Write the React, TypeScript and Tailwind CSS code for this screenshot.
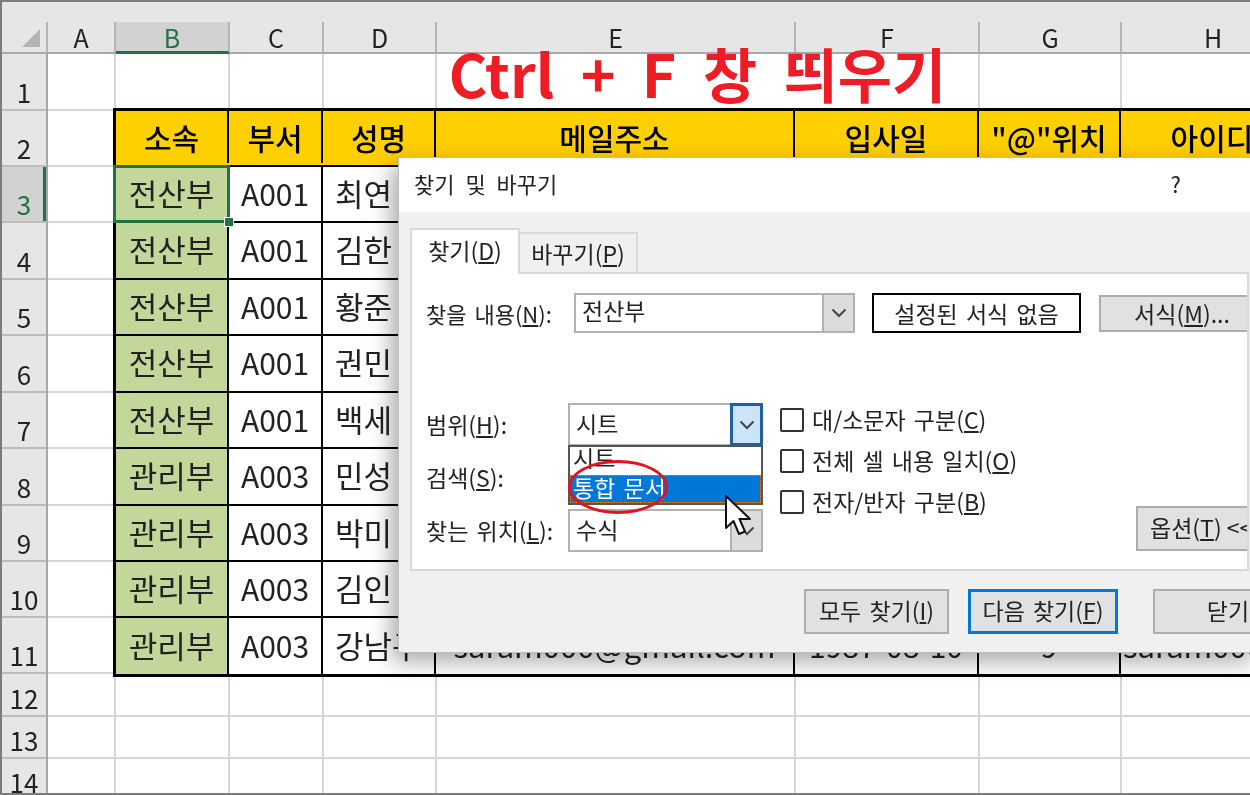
import { ReactNode } from "react";

const sheetFont = "font-['Noto_Sans_CJK_KR','Noto_Sans',sans-serif]";

const colHeaders = [
  { name: "A", width: "w-[68px]" },
  { name: "B", width: "w-[114px]" },
  { name: "C", width: "w-[94px]" },
  { name: "D", width: "w-[113px]" },
  { name: "E", width: "w-[359px]" },
  { name: "F", width: "w-[184px]" },
  { name: "G", width: "w-[142px]" },
  { name: "H", width: "w-[184px]" },
];

const rowHeights = [
  "h-[57px]", "h-[56px]", "h-[56px]", "h-[57px]", "h-[56px]", "h-[57px]", "h-[56px]",
  "h-[57px]", "h-[56px]", "h-[56px]", "h-[56px]", "h-[43px]", "h-[42px]", "h-[42px]",
];

const people = [
  { dept: "전산부", code: "A001", name: "최연", height: "h-[56px]" },
  { dept: "전산부", code: "A001", name: "김한", height: "h-[57px]" },
  { dept: "전산부", code: "A001", name: "황준", height: "h-[56px]" },
  { dept: "전산부", code: "A001", name: "권민", height: "h-[57px]" },
  { dept: "전산부", code: "A001", name: "백세", height: "h-[56px]" },
  { dept: "관리부", code: "A003", name: "민성", height: "h-[57px]" },
  { dept: "관리부", code: "A003", name: "박미", height: "h-[56px]" },
  { dept: "관리부", code: "A003", name: "김인", height: "h-[56px]" },
  { dept: "관리부", code: "A003", name: "강남구", height: "h-[56px]" },
];

const tableHeaders = [
  { text: "소속", width: "w-[113px]" },
  { text: "부서", width: "w-[94px]" },
  { text: "성명", width: "w-[113px]" },
  { text: "메일주소", width: "w-[359px]" },
  { text: "입사일", width: "w-[184px]" },
  { text: "\"@\"위치", width: "w-[142px]" },
  { text: "아이디", width: "w-[184px]" },
];

function Label({ before, mnemonic, after = "" }: { before: string; mnemonic: string; after?: string }) {
  return (
    <span className="whitespace-nowrap [word-spacing:3px]">
      {before}(<u>{mnemonic}</u>){after}
    </span>
  );
}

function Chevron() {
  return (
    <svg width="16" height="10" viewBox="0 0 16 10" fill="none" stroke="#444" strokeWidth="2">
      <path d="M1.5 1.5 L8 8 L14.5 1.5" />
    </svg>
  );
}

function Combo({ text, active }: { text: string; active?: boolean }) {
  return (
    <div className="flex h-[43px] w-[195px] border-2 border-[#b0b0b0] bg-white">
      <div className="flex-1 pl-[6px] leading-[36px]">{text}</div>
      <div
        className={
          active
            ? "flex w-[33px] -my-[2px] -mr-[2px] items-center justify-center border-[3px] border-[#1f5fa8] bg-[#cce4f7]"
            : "flex w-[33px] -my-[2px] -mr-[2px] items-center justify-center border-2 border-[#b0b0b0] bg-[#dcdcdc]"
        }
      >
        <Chevron />
      </div>
    </div>
  );
}

function Check({ children }: { children: ReactNode }) {
  return (
    <div className="flex h-[41px] items-center gap-[8px]">
      <div className="h-[24px] w-[24px] rounded-[2px] border-2 border-[#333] bg-white" />
      {children}
    </div>
  );
}

function DialogButton({ children, width, primary }: { children: ReactNode; width: string; primary?: boolean }) {
  return (
    <div
      className={`flex h-[45px] ${width} shrink-0 items-center justify-center bg-[#e1e1e1] pb-[2px] text-[23px] ${
        primary ? "border-[3px] border-[#0078d7]" : "border-2 border-[#adadad]"
      }`}
    >
      {children}
    </div>
  );
}

function FindDialog() {
  return (
    <div className="absolute left-[396px] top-[155px] h-[496px] w-[860px] border border-[#bdbdbd] bg-[#f0f0f0] text-[#222] shadow-[-6px_8px_22px_rgba(0,0,0,0.35)]">
      <div className="flex h-[54px] items-center justify-between bg-white pb-[3px] pl-[15px] pr-[76px] text-[22px]">
        <span className="[word-spacing:6px]">찾기 및 바꾸기</span>
        <span>?</span>
      </div>

      <div className="flex h-[60px] items-end pl-[11px] text-[23px]">
        <div className="relative z-10 -mb-[2px] flex h-[46px] w-[110px] items-center justify-center border-2 border-b-0 border-[#d9d9d9] bg-white pb-[3px]">
          <Label before="찾기" mnemonic="D" />
        </div>
        <div className="flex h-[40px] w-[118px] items-center justify-center border-2 border-b-0 border-l-0 border-[#d9d9d9] bg-[#f0f0f0]">
          <Label before="바꾸기" mnemonic="P" />
        </div>
      </div>

      <div className="relative ml-[11px] h-[299px] w-[839px] overflow-hidden border-2 border-[#d9d9d9] bg-white pl-[14px] pt-[19px] text-[23px]">
        <div className="flex items-center">
          <div className="w-[148px] shrink-0 text-[22px]">
            <Label before="찾을 내용" mnemonic="N" after=":" />
          </div>
          <div className="flex h-[40px] w-[281px] shrink-0 border-2 border-[#b0b0b0]">
            <div className="flex-1 pl-[6px] leading-[30px]">전산부</div>
            <div className="flex w-[33px] -my-[2px] -mr-[2px] items-center justify-center border-2 border-[#b0b0b0] bg-[#dcdcdc]">
              <Chevron />
            </div>
          </div>
          <div className="ml-[17px] flex h-[40px] w-[209px] shrink-0 items-center justify-center border-2 border-black [word-spacing:3px]">
            설정된 서식 없음
          </div>
          <div className="ml-[18px] flex h-[37px] w-[170px] shrink-0 items-center justify-center border-2 border-[#adadad] bg-[#e1e1e1] pr-[4px]">
            서식(<u>M</u>)...
          </div>
        </div>

        <div className="mt-[70px] flex">
          <div className="flex w-[142px] shrink-0 flex-col">
            <div className="flex h-[53px] items-center pb-[10px]"><Label before="범위" mnemonic="H" after=":" /></div>
            <div className="flex h-[53px] items-center pb-[10px]"><Label before="검색" mnemonic="S" after=":" /></div>
            <div className="flex h-[53px] items-center pb-[10px]"><Label before="찾는 위치" mnemonic="L" after=":" /></div>
          </div>

          <div className="relative flex w-[195px] shrink-0 flex-col gap-[10px]">
            <Combo text="시트" active />
            <Combo text="" />
            <Combo text="수식" />
            <div className="absolute left-0 top-[42px] w-[195px] border-2 border-[#555] bg-white">
              <div className="h-[28px] pl-[3px] leading-[20px]">시트</div>
              <div className="h-[28px] border border-dotted border-[#e08a2a] bg-[#0078d7] pl-[2px] leading-[22px] text-white [word-spacing:3px]">
                통합 문서
              </div>
            </div>
          </div>

          <div className="ml-[17px] -mt-[4px] flex w-[300px] shrink-0 flex-col">
            <Check><Label before="대/소문자 구분" mnemonic="C" /></Check>
            <Check><Label before="전체 셀 내용 일치" mnemonic="O" /></Check>
            <Check><Label before="전자/반자 구분" mnemonic="B" /></Check>
          </div>

          <div className="ml-[56px] shrink-0 pt-[103px]">
            <DialogButton width="w-[140px]">
              <span className="w-full whitespace-nowrap pl-[12px]">옵션(<u>T</u>) &lt;&lt;</span>
            </DialogButton>
          </div>
        </div>
      </div>

      <div className="flex pl-[405px] pt-[18px]">
        <DialogButton width="w-[145px]"><Label before="모두 찾기" mnemonic="I" /></DialogButton>
        <DialogButton width="w-[150px] ml-[19px]" primary><Label before="다음 찾기" mnemonic="F" /></DialogButton>
        <DialogButton width="w-[150px] ml-[35px]">닫기</DialogButton>
      </div>
    </div>
  );
}

export default function App() {
  return (
    <div className={`relative h-[795px] w-[1250px] overflow-hidden border-2 border-r-0 border-[#7c7c7c] bg-white text-[#222] blur-[0.5px] ${sheetFont}`}>
      <div className="h-[20px] bg-[#e6e6e6]" />

      {/* column headers */}
      <div className="flex h-[32px] w-[1400px] border-b-2 border-[#a8a8a8] bg-[#e6e6e6] text-[25px] leading-[30px] text-[#222]">
        <div className="flex w-[46px] shrink-0 items-end justify-end border-r-2 border-[#b4b4b4] pb-[5px] pr-[6px]">
          <svg width="18" height="18" viewBox="0 0 18 18"><path d="M18 0 V18 H0 Z" fill="#b4b4b4" /></svg>
        </div>
        {colHeaders.map((c) => (
          <div
            key={c.name}
            className={
              c.name === "B"
                ? `${c.width} -mb-[2px] border-b-[3px] border-r-2 border-b-[#217346] border-r-[#b4b4b4] bg-[#d2d2d2] text-center text-[#217346]`
                : `${c.width} border-r-2 border-[#b4b4b4] text-center`
            }
          >
            {c.name}
          </div>
        ))}
      </div>

      {/* grid */}
      <div className="relative flex w-[1400px]">
        <div className="flex w-[46px] shrink-0 flex-col border-r-2 border-[#a8a8a8] bg-[#e6e6e6] text-[26px]">
          {rowHeights.map((h, i) => (
            <div
              key={i}
              className={
                i === 2
                  ? `${h} flex items-end justify-center border-b-2 border-[#bdbdbd] bg-[#d2d2d2] leading-[35px] text-[#217346] shadow-[inset_-3px_0_0_#217346]`
                  : `${h} flex items-end justify-center border-b-2 border-[#bdbdbd] leading-[35px]`
              }
            >
              {i + 1}
            </div>
          ))}
        </div>
        <div className="flex flex-1 flex-col">
          {rowHeights.map((h, i) => (
            <div key={i} className={`${h} flex border-b-2 border-[#d6d6d6]`}>
              {colHeaders.map((c) =>
                i === 0 && c.name === "E" ? (
                  <div key={c.name} className="w-[543px] border-r-2 border-[#d6d6d6]" />
                ) : i === 0 && c.name === "F" ? null : (
                  <div key={c.name} className={`${c.width} border-r-2 border-[#d6d6d6]`} />
                )
              )}
            </div>
          ))}
        </div>

        {/* 제목 */}
        <div className="absolute left-[434px] top-[-17px] w-[543px] whitespace-nowrap pr-[20px] text-center text-[59px] font-bold leading-[72px] text-[#ee1c25] [word-spacing:13px]">
          Ctrl + F 창 띄우기
        </div>

        {/* 표 */}
        <div className="absolute left-[111px] top-[54px] border-[3px] border-r-0 border-black text-[31px]">
          <div className="flex h-[56px] border-b-2 border-black bg-[#ffd000] pb-[2px] text-[30px] font-medium text-black">
            {tableHeaders.map((t) => (
              <div key={t.text} className={`${t.width} flex items-center justify-center whitespace-nowrap border-r-2 border-black`}>
                {t.text}
              </div>
            ))}
          </div>
          {people.map((p, i) => (
            <div key={i} className={`flex ${p.height} ${i === 8 ? "" : "border-b-2 border-black"}`}>
              <div className="flex w-[113px] items-center justify-center border-r-2 border-black bg-[#c4d79b] pb-[2px]">{p.dept}</div>
              <div className="flex w-[94px] items-center justify-center border-r-2 border-black bg-white pb-[2px] text-[30px]">{p.code}</div>
              <div className="flex w-[113px] items-center whitespace-nowrap border-r-2 border-black bg-white pb-[2px] pl-[12px]">{p.name}</div>
              {i === 8 ? (
                <>
                  <div className="flex w-[359px] items-center justify-center border-r-2 border-black bg-white pb-[2px] text-[31px]">saram000@gmail.com</div>
                  <div className="flex w-[184px] items-center justify-center border-r-2 border-black bg-white pb-[2px] text-[30px]">1987-08-10</div>
                  <div className="flex w-[142px] items-center justify-center border-r-2 border-black bg-white pb-[2px] text-[30px]">9</div>
                  <div className="flex w-[184px] items-center justify-start bg-white pb-[2px] pl-[2px] text-[31px]">saram000</div>
                </>
              ) : (
                <div className="w-[869px] bg-white" />
              )}
            </div>
          ))}
          {/* 선택 셀 */}
          <div className="absolute left-[-3px] top-[54px] h-[58px] w-[117px] border-[3px] border-[#217346]" />
          <div className="absolute left-[108px] top-[106px] h-[10px] w-[10px] border border-white bg-[#217346]" />
        </div>
      </div>

      <FindDialog />

      <div className="absolute left-[566px] top-[458px] h-[54px] w-[100px] rounded-[50%] border-[3px] border-[#e0141e]" />
      <svg className="absolute left-[722px] top-[492px]" width="30" height="44" viewBox="0 0 30 44">
        <path d="M2 2 V34 L9.5 27 L15 40 L21 37.5 L15.5 25 L26 25 Z" fill="#fff" stroke="#111" strokeWidth="2" strokeLinejoin="round" />
      </svg>
    </div>
  );
}
